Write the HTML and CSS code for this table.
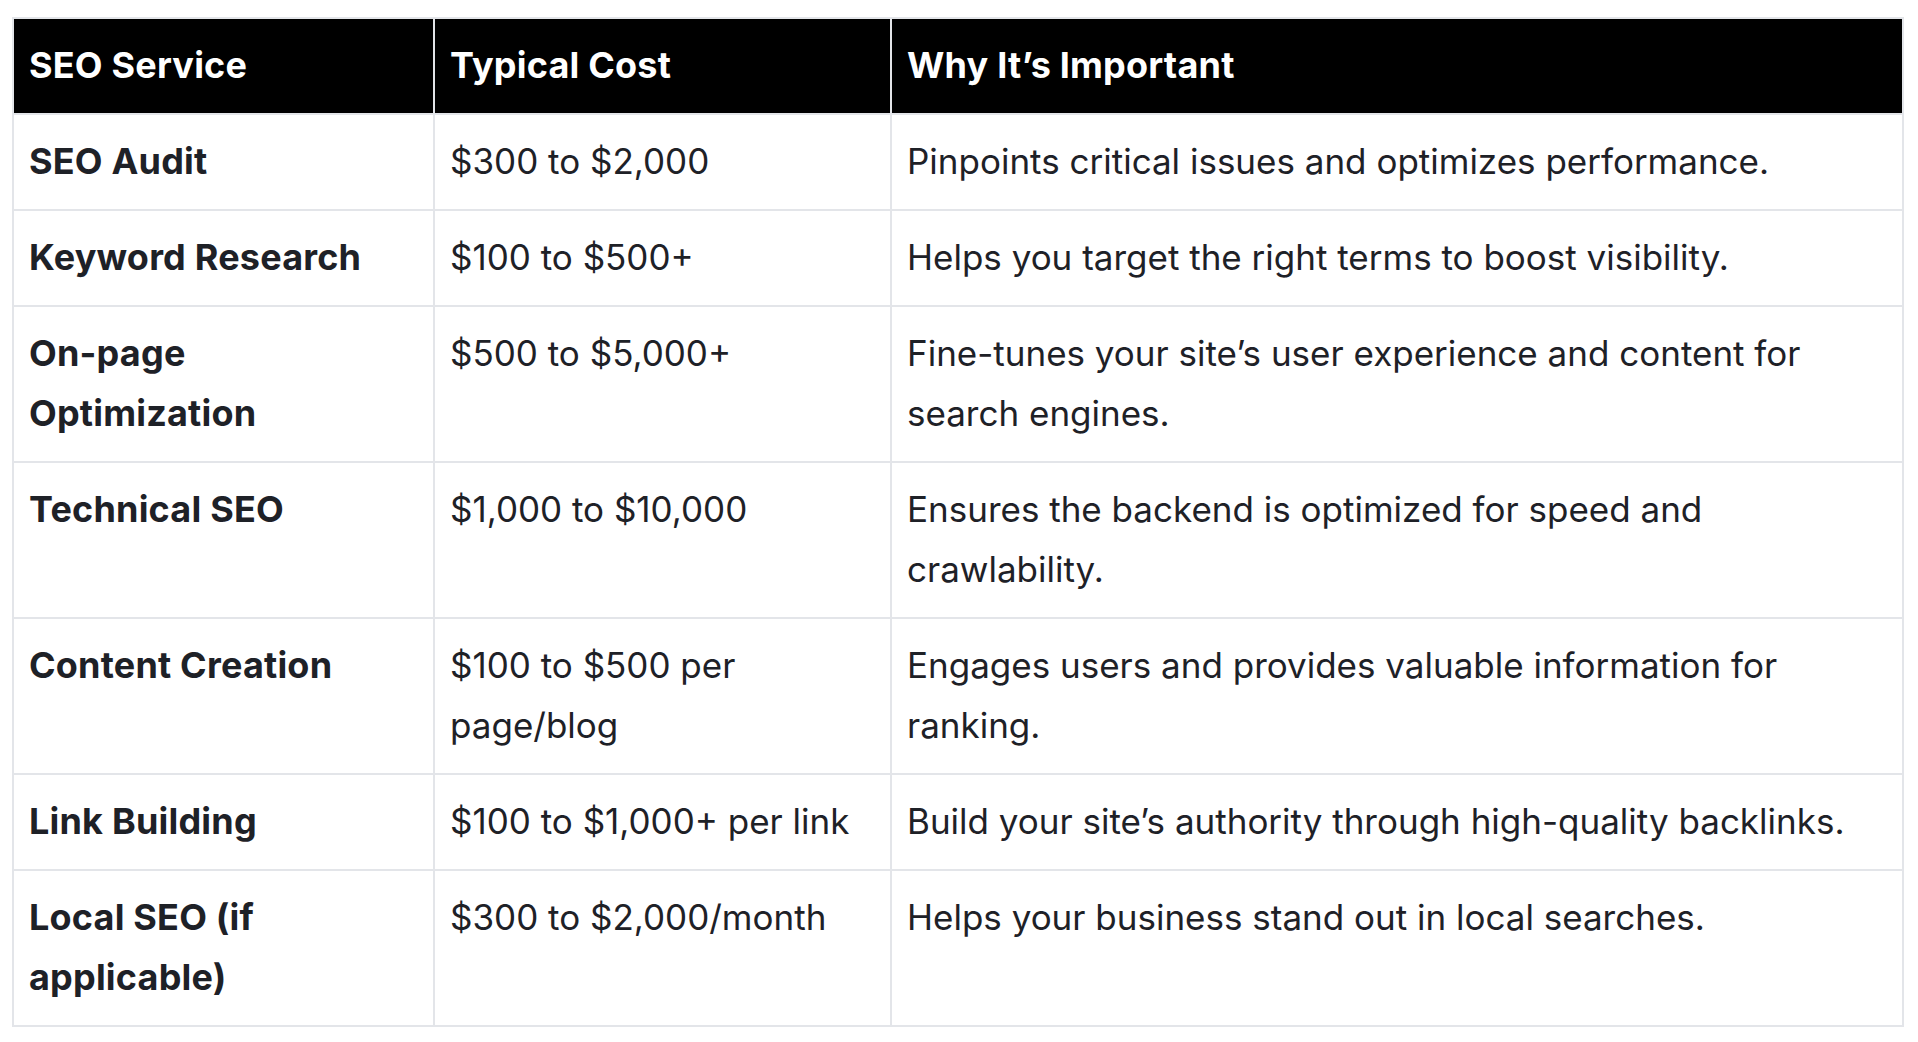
FILE: index.html
```html
<!DOCTYPE html>
<html lang="en">
<head>
<meta charset="utf-8">
<title>SEO Service Costs</title>
<link rel="stylesheet" href="styles.css">
</head>
<body>
<table class="cost-table">
  <colgroup>
    <col class="col-service">
    <col class="col-cost">
    <col class="col-why">
  </colgroup>
  <thead>
    <tr>
      <th>SEO Service</th>
      <th>Typical Cost</th>
      <th>Why It’s Important</th>
    </tr>
  </thead>
  <tbody>
    <tr>
      <td class="service">SEO Audit</td>
      <td>$300 to $2,000</td>
      <td>Pinpoints critical issues and optimizes performance.</td>
    </tr>
    <tr>
      <td class="service">Keyword Research</td>
      <td>$100 to $500+</td>
      <td>Helps you target the right terms to boost visibility.</td>
    </tr>
    <tr>
      <td class="service">On-page Optimization</td>
      <td>$500 to $5,000+</td>
      <td>Fine-tunes your site’s user experience and content for search engines.</td>
    </tr>
    <tr>
      <td class="service">Technical SEO</td>
      <td>$1,000 to $10,000</td>
      <td>Ensures the backend is optimized for speed and crawlability.</td>
    </tr>
    <tr>
      <td class="service">Content Creation</td>
      <td>$100 to $500 per page/blog</td>
      <td>Engages users and provides valuable information for ranking.</td>
    </tr>
    <tr>
      <td class="service">Link Building</td>
      <td>$100 to $1,000+ per link</td>
      <td>Build your site’s authority through high-quality backlinks.</td>
    </tr>
    <tr>
      <td class="service">Local SEO (if applicable)</td>
      <td>$300 to $2,000/month</td>
      <td>Helps your business stand out in local searches.</td>
    </tr>
  </tbody>
</table>
</body>
</html>
```
FILE: styles.css
```css
html, body {
  margin: 0;
  padding: 0;
  background: #ffffff;
}

body {
  padding: 17px 16px 0 12px;
  font-family: Inter, "Liberation Sans", sans-serif;
  color: #1e2127;
}

.cost-table {
  width: 1890px;
  border-collapse: collapse;
  table-layout: fixed;
  font-size: 35px;
  line-height: 60px;
}

.col-service { width: 421px; }
.col-cost { width: 457px; }
.col-why { width: 1012px; }

.cost-table th,
.cost-table td {
  border: 2px solid #e3e5e9;
  padding: 16px 17px 18px 15px;
  text-align: left;
  vertical-align: top;
}

.cost-table th {
  background: #000000;
  color: #ffffff;
  font-weight: 700;
  font-size: 36px;
  letter-spacing: 0.2px;
}

.cost-table td.service {
  font-weight: 700;
  font-size: 36px;
  letter-spacing: 0.2px;
}
```
